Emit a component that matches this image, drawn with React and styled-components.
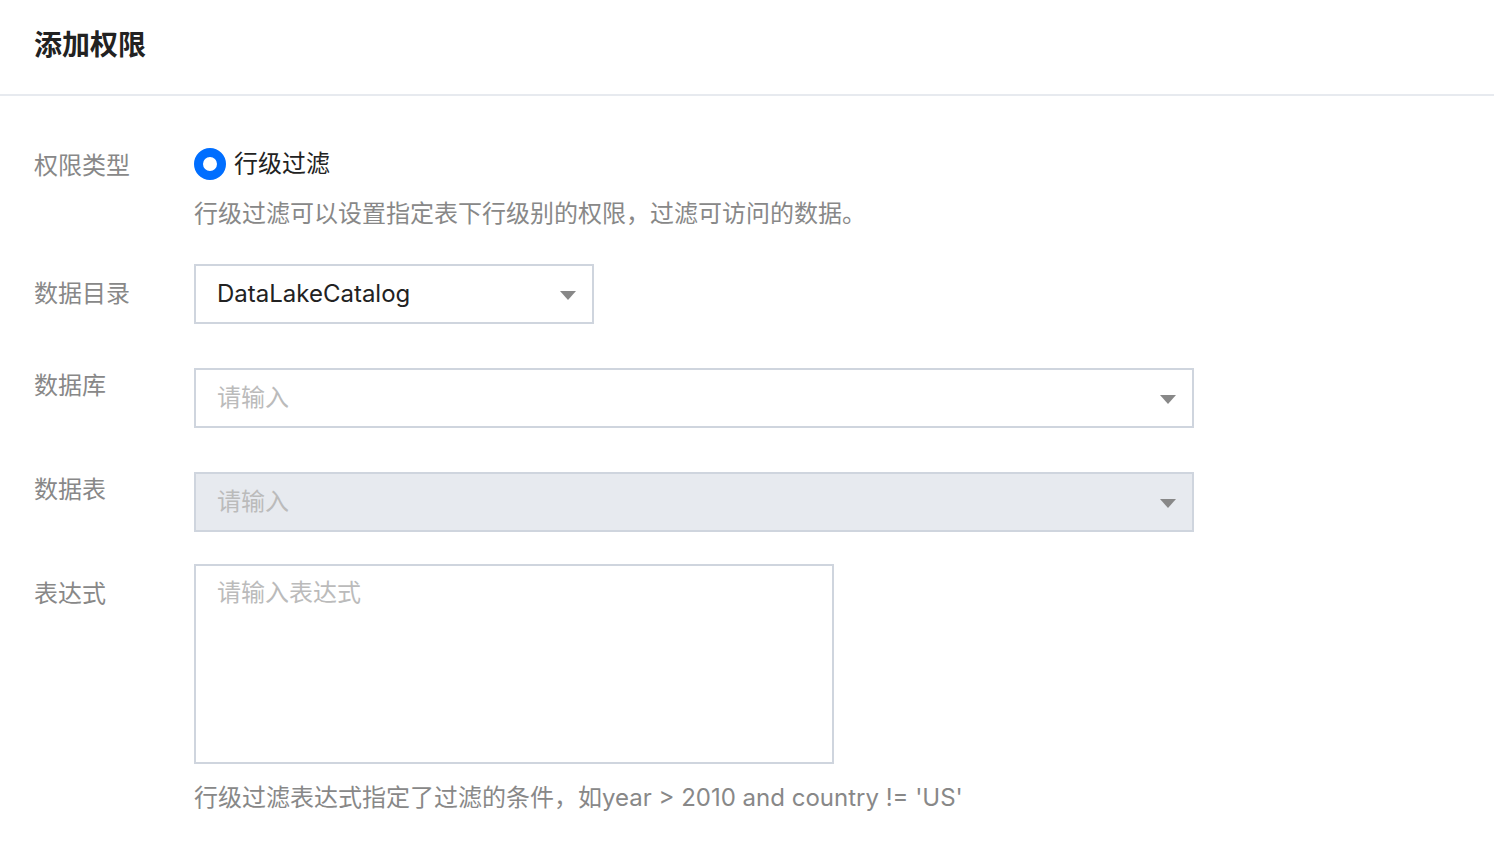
import React from "react";
import styled, { createGlobalStyle } from "styled-components";

const Global = createGlobalStyle`
  html, body { margin: 0; padding: 0; background: #fff; }
  body {
    font-family: Inter, "Noto Sans CJK SC", sans-serif;
    color: #222;
    -webkit-font-smoothing: antialiased;
  }
  * { box-sizing: border-box; }
`;

const Page = styled.div`
  width: 1494px;
  min-height: 862px;
  background: #fff;
`;

const Header = styled.header`
  height: 96px;
  padding-left: 34px;
  display: flex;
  align-items: center;
  border-bottom: 2px solid #e7eaef;
`;

const Title = styled.h1`
  margin: 0;
  margin-top: -4px;
  font-size: 28px;
  font-weight: 700;
  color: #222;
  line-height: 40px;
`;

const Form = styled.div`
  padding: 52px 34px 0 34px;
  display: flex;
  flex-direction: column;
`;

const Row = styled.div`
  display: flex;
  align-items: flex-start;
  margin-top: ${(p) => p.$mt || 0}px;
`;

const Label = styled.div`
  width: 160px;
  flex: none;
  padding-top: ${(p) => p.$pt || 0}px;
  font-size: 24px;
  line-height: 32px;
  color: #888;
`;

const Control = styled.div`
  display: flex;
  flex-direction: column;
`;

const RadioRow = styled.label`
  display: flex;
  align-items: center;
  gap: 8px;
  height: 32px;
  font-size: 24px;
  line-height: 32px;
  color: #222;
`;

const RadioText = styled.span`
  margin-top: -1px;
`;

const RadioDot = styled.span`
  width: 32px;
  height: 32px;
  border-radius: 50%;
  border: 9px solid #006eff;
  background: #fff;
  flex: none;
`;

const Help = styled.div`
  margin-top: ${(p) => p.$mt || 0}px;
  font-size: 24px;
  line-height: 32px;
  color: #888;
`;

const Select = styled.div`
  width: ${(p) => p.$w}px;
  height: 60px;
  border: 2px solid #cfd5de;
  background: ${(p) => (p.$disabled ? "#e7eaef" : "#fff")};
  display: flex;
  align-items: center;
  justify-content: space-between;
  padding: 0 16px 0 21px;
  font-size: 24px;
  line-height: 32px;
  color: ${(p) => (p.$placeholder ? "#bbb" : "#222")};
`;

const Caret = styled.span`
  width: 0;
  height: 0;
  border-left: 8px solid transparent;
  border-right: 8px solid transparent;
  border-top: 9px solid #888;
  margin-top: 2px;
`;

const TextArea = styled.div`
  width: 640px;
  height: 200px;
  border: 2px solid #cfd5de;
  padding: 11px 21px;
  font-size: 24px;
  line-height: 32px;
  color: #bbb;
`;

export default function App() {
  return (
    <Page>
      <Global />
      <Header>
        <Title>添加权限</Title>
      </Header>
      <Form>
        <Row>
          <Label $pt={2}>权限类型</Label>
          <Control>
            <RadioRow>
              <RadioDot />
              <RadioText>行级过滤</RadioText>
            </RadioRow>
            <Help $mt={18}>行级过滤可以设置指定表下行级别的权限，过滤可访问的数据。</Help>
          </Control>
        </Row>
        <Row $mt={34}>
          <Label $pt={14}>数据目录</Label>
          <Select $w={400}>
            <span>DataLakeCatalog</span>
            <Caret />
          </Select>
        </Row>
        <Row $mt={44}>
          <Label $pt={2}>数据库</Label>
          <Select $w={1000} $placeholder>
            <span>请输入</span>
            <Caret />
          </Select>
        </Row>
        <Row $mt={44}>
          <Label $pt={2}>数据表</Label>
          <Select $w={1000} $placeholder $disabled>
            <span>请输入</span>
            <Caret />
          </Select>
        </Row>
        <Row $mt={32}>
          <Label $pt={14}>表达式</Label>
          <Control>
            <TextArea>请输入表达式</TextArea>
            <Help $mt={18}>行级过滤表达式指定了过滤的条件，如year &gt; 2010 and country != 'US'</Help>
          </Control>
        </Row>
      </Form>
    </Page>
  );
}
